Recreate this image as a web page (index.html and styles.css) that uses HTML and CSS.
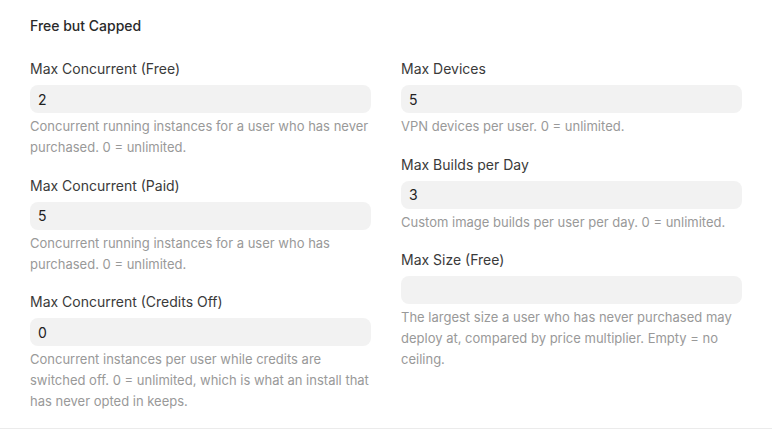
FILE: index.html
```html
<!DOCTYPE html>
<html lang="en">
<head>
    <meta charset="UTF-8">
    <meta name="viewport" content="width=device-width, initial-scale=1.0">
    <title>Free but Capped</title>
    <link rel="stylesheet" href="styles.css">
</head>
<body>
    <section class="settings-section">
        <h2 class="section-title">Free but Capped</h2>

        <div class="settings-grid">
            <div class="settings-col">
                <div class="field">
                    <label class="field-label" for="maxConcFree">Max Concurrent (Free)</label>
                    <input type="text" id="maxConcFree" class="field-input" value="2">
                    <p class="field-help">Concurrent running instances for a user who has never purchased. 0 = unlimited.</p>
                </div>
                <div class="field">
                    <label class="field-label" for="maxConcPaid">Max Concurrent (Paid)</label>
                    <input type="text" id="maxConcPaid" class="field-input" value="5">
                    <p class="field-help">Concurrent running instances for a user who has purchased. 0 = unlimited.</p>
                </div>
                <div class="field">
                    <label class="field-label" for="maxConcOff">Max Concurrent (Credits Off)</label>
                    <input type="text" id="maxConcOff" class="field-input" value="0">
                    <p class="field-help">Concurrent instances per user while credits are switched off. 0 = unlimited, which is what an install that has never opted in keeps.</p>
                </div>
            </div>

            <div class="settings-col">
                <div class="field">
                    <label class="field-label" for="maxDevices">Max Devices</label>
                    <input type="text" id="maxDevices" class="field-input" value="5">
                    <p class="field-help">VPN devices per user. 0 = unlimited.</p>
                </div>
                <div class="field">
                    <label class="field-label" for="maxBuilds">Max Builds per Day</label>
                    <input type="text" id="maxBuilds" class="field-input" value="3">
                    <p class="field-help">Custom image builds per user per day. 0 = unlimited.</p>
                </div>
                <div class="field">
                    <label class="field-label" for="maxSize">Max Size (Free)</label>
                    <input type="text" id="maxSize" class="field-input" value="">
                    <p class="field-help">The largest size a user who has never purchased may deploy at, compared by price multiplier. Empty = no ceiling.</p>
                </div>
            </div>
        </div>
    </section>
</body>
</html>
```

FILE: styles.css
```css
* {
    margin: 0;
    padding: 0;
    box-sizing: border-box;
}

body {
    font-family: Inter, 'Noto Sans', sans-serif;
    background: #ffffff;
    color: #333;
}

.settings-section {
    padding: 16px 30px 16px;
    border-bottom: 1px solid #ebebeb;
}

.section-title {
    font-size: 14px;
    line-height: 20px;
    font-weight: 500;
    color: #2a2a2a;
    margin-bottom: 23px;
}

.settings-grid {
    display: grid;
    grid-template-columns: 1fr 1fr;
    column-gap: 30px;
}

.settings-col {
    display: flex;
    flex-direction: column;
    gap: 17.5px;
}

.field {
    display: flex;
    flex-direction: column;
}

.field-label {
    font-size: 14px;
    line-height: 20px;
    color: #3a3a3a;
    margin-bottom: 6px;
}

.field-input {
    width: 100%;
    height: 28px;
    padding: 0 8px;
    border: none;
    border-radius: 8px;
    background: #f2f2f2;
    font-family: inherit;
    font-size: 14px;
    color: #222;
    outline: none;
}

.field-help {
    margin-top: 3px;
    font-size: 13px;
    line-height: 21px;
    color: #999;
}
```
